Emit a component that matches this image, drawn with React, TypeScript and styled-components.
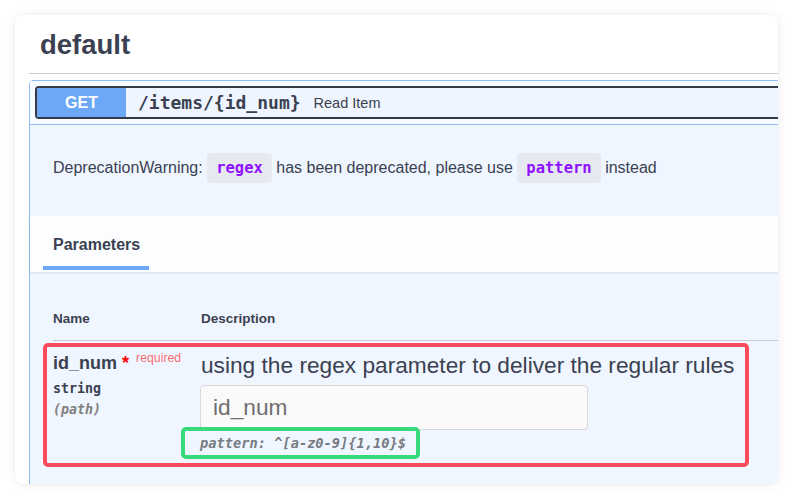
import React from "react";
import styled, { createGlobalStyle } from "styled-components";

const GlobalStyle = createGlobalStyle`
  html, body { margin: 0; padding: 0; background: #ffffff; }
  body { font-family: "Liberation Sans", Arial, sans-serif; color: #3b4151; }
  * { box-sizing: border-box; }
`;

const Page = styled.div`
  padding: 15px;
`;

const Card = styled.section`
  width: 763px;
  height: 469px;
  background: #ffffff;
  border-radius: 8px;
  overflow: hidden;
  box-shadow: 0 0 12px rgba(0, 0, 0, 0.07), 0 1px 3px rgba(0, 0, 0, 0.04);
  padding-left: 14px;
`;

const TagHeading = styled.h3`
  margin: 0;
  padding: 15px 0 13px 11px;
  font-size: 27.5px;
  font-weight: 700;
  line-height: 30px;
  color: #3b4151;
  border-bottom: 1px solid #c9cbcf;
`;

const OpBlock = styled.div`
  margin: 6px -20px 0 0;
  border: 1px solid #8dbcf6;
  border-radius: 4px;
  background: #eff6ff;
  min-height: 420px;
`;

const Summary = styled.div`
  padding: 5px;
  background: #f8fbff;
  border-bottom: 1px solid #8dbcf6;
`;

const SummaryButton = styled.div`
  display: flex;
  align-items: center;
  height: 33px;
  border: 2px solid #343a47;
  border-radius: 4px;
  background: #eef5ff;
`;

const MethodBadge = styled.span`
  display: flex;
  align-items: center;
  justify-content: center;
  width: 89px;
  height: 100%;
  background: #6ca8f5;
  border-radius: 2px 0 0 2px;
  color: #ffffff;
  font-size: 16px;
  font-weight: 700;
`;

const PathText = styled.span`
  margin-left: 12px;
  font-family: "DejaVu Sans Mono", monospace;
  font-size: 18px;
  font-weight: 700;
  color: #3b4151;
`;

const SummaryText = styled.span`
  margin-left: 13px;
  font-size: 14.5px;
  color: #3b4151;
`;

const Description = styled.p`
  margin: 0;
  padding: 28px 23px 33px;
  font-size: 16px;
  line-height: 30px;
  color: #3b4151;
`;

const Code = styled.code`
  display: inline-block;
  height: 30px;
  padding: 0 9px;
  border-radius: 4px;
  background: #e6e9f0;
  font-family: "DejaVu Sans Mono", monospace;
  font-size: 15.5px;
  font-weight: 700;
  line-height: 30px;
  color: #9012fe;
`;

const SectionHeader = styled.div`
  height: 57px;
  padding: 20px 23px 0;
  background: #fcfdff;
  border-bottom: 1px solid #e1e4e9;
  box-shadow: 0 1px 2px rgba(0, 0, 0, 0.05);
`;

const TabTitle = styled.h4`
  position: relative;
  display: inline-block;
  margin: 0;
  font-size: 16px;
  font-weight: 700;
  line-height: 18px;
  color: #3b4151;

  &::after {
    content: "";
    position: absolute;
    left: -10px;
    right: -9px;
    bottom: -16px;
    height: 4px;
    background: #6ca8f5;
  }
`;

const ParamsBody = styled.div`
  padding: 25px 0 0 23px;
`;

const TableHead = styled.div`
  display: grid;
  grid-template-columns: 148px 1fr;
  padding: 12px 0 13px;
  border-bottom: 1px solid #c8ccd3;
  font-size: 13.5px;
  font-weight: 700;
  line-height: 17px;
  color: #3b4151;
`;

const ParamRow = styled.div`
  display: grid;
  grid-template-columns: 148px 1fr;
  width: 706px;
  margin: 2px 0 0 -10px;
  padding: 5px 6px 4px;
  border: 4px solid #fb4b5d;
  border-radius: 5px;
`;

const NameCell = styled.div`
  display: flex;
  flex-direction: column;
  align-items: flex-start;
`;

const ParamName = styled.div`
  margin-top: 1px;
  font-size: 18px;
  font-weight: 700;
  line-height: 21px;
  color: #3b4151;
  white-space: nowrap;
`;

const Asterisk = styled.span`
  color: #ff0000;
`;

const Required = styled.span`
  position: relative;
  top: -7px;
  padding-left: 7px;
  font-size: 12.3px;
  font-weight: 400;
  color: rgba(255, 0, 0, 0.6);
`;

const ParamType = styled.div`
  padding: 5px 0 0;
  font-family: "DejaVu Sans Mono", monospace;
  font-size: 13.3px;
  font-weight: 700;
  line-height: 15px;
  color: #3b4151;
`;

const ParamIn = styled.div`
  padding-top: 6px;
  font-family: "DejaVu Sans Mono", monospace;
  font-size: 13.3px;
  font-style: italic;
  font-weight: 700;
  line-height: 15px;
  color: #808080;
`;

const DescCell = styled.div`
  display: flex;
  flex-direction: column;
  align-items: flex-start;
`;

const DescText = styled.div`
  font-size: 22.7px;
  line-height: 26px;
  color: #3b4151;
  white-space: nowrap;
`;

const TextInput = styled.input`
  width: 388px;
  height: 45px;
  margin: 7px 0 0 -1px;
  padding: 0 12px;
  border: 1px solid #d9d9d9;
  border-radius: 4px;
  background: #fafafa;
  font-family: "Liberation Sans", Arial, sans-serif;
  font-size: 22.7px;
  color: #3b4151;
  outline: none;

  &::placeholder {
    color: #6f6f6f;
  }
`;

const PatternBox = styled.div`
  margin: -3px 0 0 -20px;
  padding: 5px 10px 4px 15px;
  border: 4px solid #37d97a;
  border-radius: 5px;
  font-family: "DejaVu Sans Mono", monospace;
  font-size: 13.7px;
  font-style: italic;
  font-weight: 700;
  line-height: 15px;
  color: #777b82;
  white-space: nowrap;
`;

export default function App() {
  return (
    <>
      <GlobalStyle />
      <Page>
        <Card>
          <TagHeading>default</TagHeading>
          <OpBlock>
            <Summary>
              <SummaryButton>
                <MethodBadge>GET</MethodBadge>
                <PathText>/items/{"{id_num}"}</PathText>
                <SummaryText>Read Item</SummaryText>
              </SummaryButton>
            </Summary>
            <Description>
              DeprecationWarning: <Code>regex</Code> has been deprecated, please use{" "}
              <Code>pattern</Code> instead
            </Description>
            <SectionHeader>
              <TabTitle>Parameters</TabTitle>
            </SectionHeader>
            <ParamsBody>
              <TableHead>
                <span>Name</span>
                <span>Description</span>
              </TableHead>
              <ParamRow>
                <NameCell>
                  <ParamName>
                    id_num<Asterisk>{"\u00a0*"}</Asterisk>
                    <Required>required</Required>
                  </ParamName>
                  <ParamType>string</ParamType>
                  <ParamIn>(path)</ParamIn>
                </NameCell>
                <DescCell>
                  <DescText>using the regex parameter to deliver the regular rules</DescText>
                  <TextInput placeholder="id_num" readOnly />
                  <PatternBox>pattern: ^[a-z0-9]{"{1,10}"}$</PatternBox>
                </DescCell>
              </ParamRow>
            </ParamsBody>
          </OpBlock>
        </Card>
      </Page>
    </>
  );
}
